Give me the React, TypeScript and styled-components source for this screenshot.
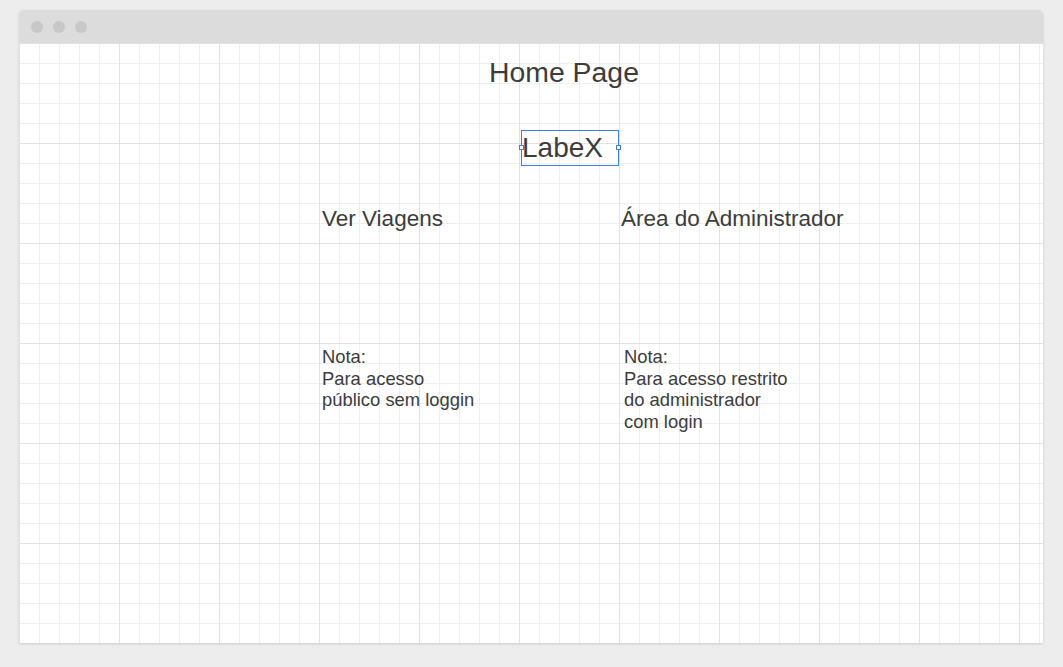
import React from "react";
import styled, { createGlobalStyle } from "styled-components";

const GlobalStyle = createGlobalStyle`
  html, body {
    margin: 0;
    padding: 0;
    background: #ededed;
  }
  body {
    font-family: "Liberation Sans", Arial, sans-serif;
    color: #3c3c3c;
  }
`;

const Page = styled.div`
  width: 1063px;
  height: 667px;
  box-sizing: border-box;
  padding: 10px 0 0 19px;
  background: #ededed;
`;

const Window = styled.div`
  width: 1024px;
  display: flex;
  flex-direction: column;
  border-radius: 5px 5px 0 0;
  overflow: hidden;
  box-shadow: 0 1px 3px rgba(0, 0, 0, 0.14);
`;

const TitleBar = styled.div`
  height: 33px;
  background: #dcdcdc;
  display: flex;
  align-items: center;
  gap: 10px;
  padding-left: 12px;
`;

const Dot = styled.span`
  width: 12px;
  height: 12px;
  border-radius: 50%;
  background: #c8c8c8;
`;

const Canvas = styled.div`
  height: 600px;
  box-sizing: border-box;
  display: flex;
  flex-direction: column;
  align-items: flex-start;
  padding-top: 13px;
  background-color: #ffffff;
  background-image:
    linear-gradient(to right, #e2e2e2 1px, transparent 1px),
    linear-gradient(to bottom, #e2e2e2 1px, transparent 1px),
    linear-gradient(to right, #efefef 1px, transparent 1px),
    linear-gradient(to bottom, #efefef 1px, transparent 1px);
  background-size: 100px 100px, 100px 100px, 20px 20px, 20px 20px;
`;

const Title = styled.div`
  margin-left: 470px;
  font-size: 28.4px;
  line-height: 32px;
  white-space: nowrap;
`;

const LogoBox = styled.div`
  position: relative;
  margin-top: 42px;
  margin-left: 502px;
  width: 98px;
  height: 36px;
  box-sizing: border-box;
  border: 1px solid #3d7ee2;
  display: flex;
  align-items: center;
  font-size: 28px;
  line-height: 32px;
`;

const Handle = styled.span<{ $side: "left" | "right" }>`
  position: absolute;
  top: 50%;
  ${(p) => (p.$side === "left" ? "left: -3px;" : "right: -3px;")}
  width: 5px;
  height: 5px;
  margin-top: -3px;
  box-sizing: border-box;
  background: #ffffff;
  border: 1px solid #3d7ee2;
`;

const Row = styled.div<{ $offset: number; $col: number; $gap: number }>`
  display: grid;
  grid-template-columns: ${(p) => p.$col}px auto;
  margin-left: ${(p) => p.$offset}px;
  margin-top: ${(p) => p.$gap}px;
`;

const Heading = styled.div`
  font-size: 22.5px;
  line-height: 25px;
  white-space: nowrap;
`;

const Note = styled.div`
  font-size: 18.4px;
  line-height: 21.6px;
  white-space: pre-line;
`;

export default function App() {
  return (
    <>
      <GlobalStyle />
      <Page>
        <Window>
          <TitleBar>
            <Dot />
            <Dot />
            <Dot />
          </TitleBar>
          <Canvas>
            <Title>Home Page</Title>
            <LogoBox>
              LabeX
              <Handle $side="left" />
              <Handle $side="right" />
            </LogoBox>
            <Row $offset={303} $col={299} $gap={40}>
              <Heading>Ver Viagens</Heading>
              <Heading>Área do Administrador</Heading>
            </Row>
            <Row $offset={303} $col={302} $gap={115}>
              <Note>{"Nota:\nPara acesso\npúblico sem loggin"}</Note>
              <Note>{"Nota:\nPara acesso restrito\ndo administrador\ncom login"}</Note>
            </Row>
          </Canvas>
        </Window>
      </Page>
    </>
  );
}
